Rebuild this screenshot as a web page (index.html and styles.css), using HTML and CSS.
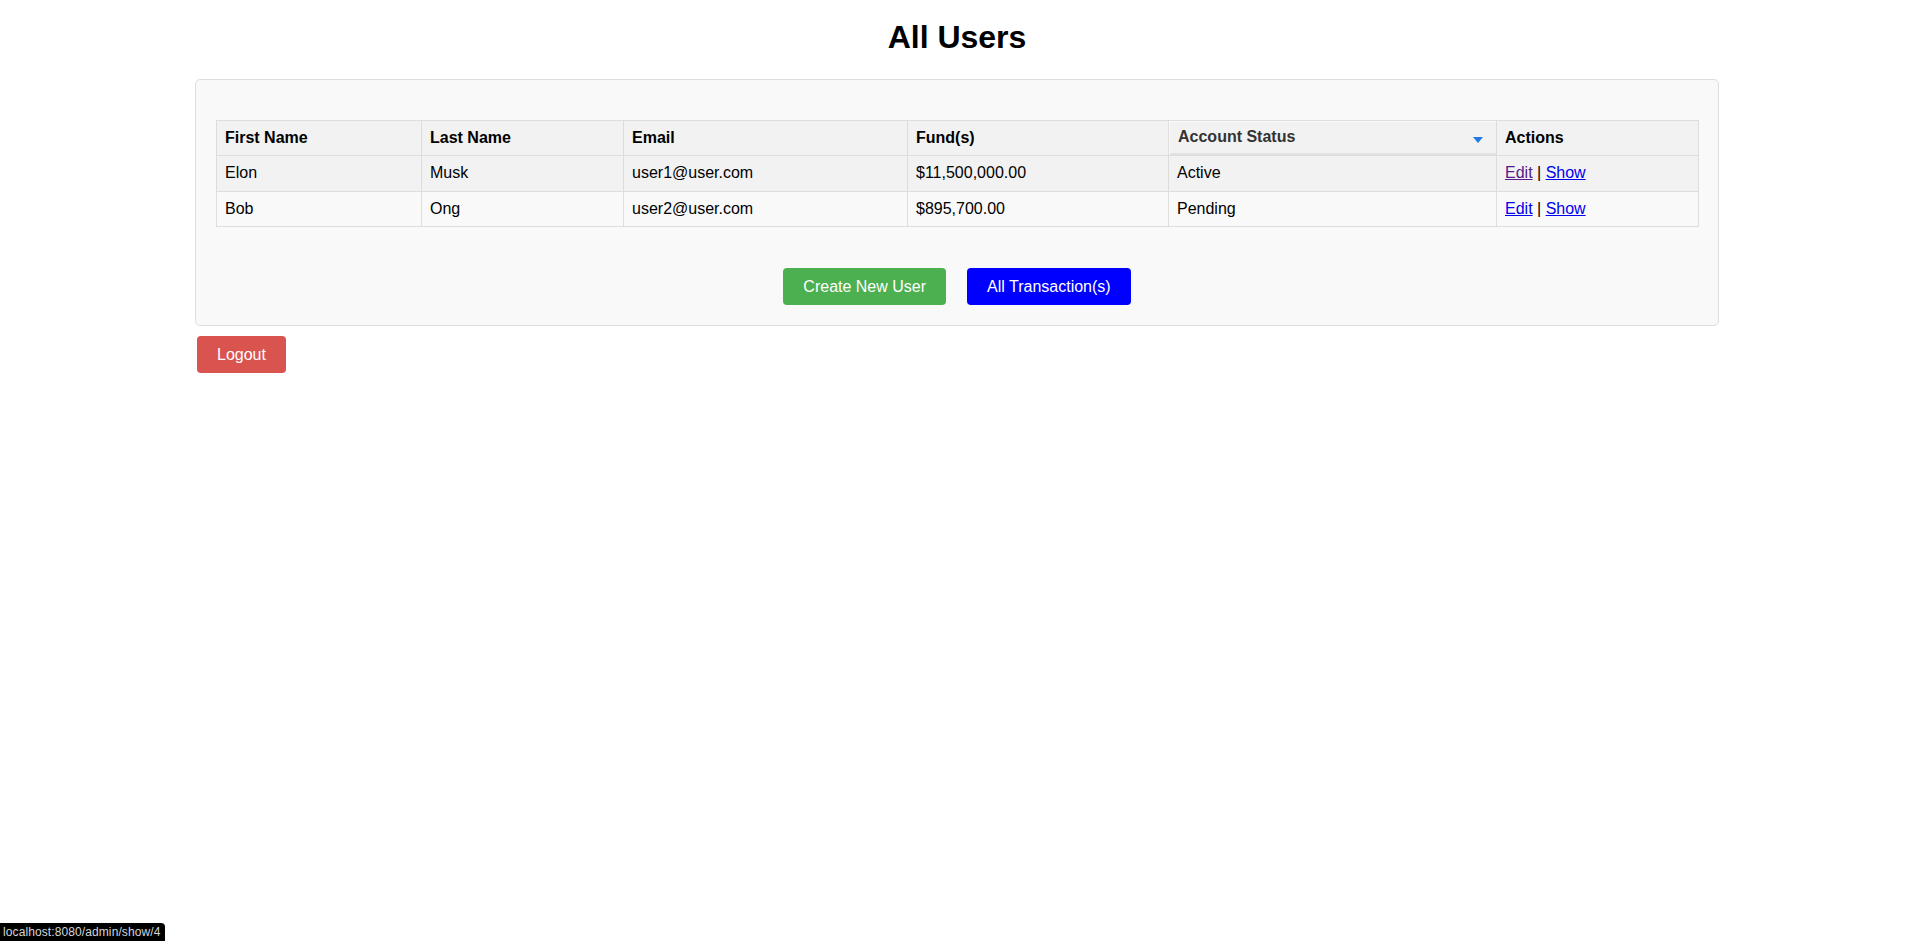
FILE: index.html
```html
<!DOCTYPE html>
<html lang="en">
<head>
<meta charset="utf-8">
<title>All Users</title>
<link rel="stylesheet" href="styles.css">
</head>
<body>
<div class="page">
  <h1 class="title">All Users</h1>
  <div class="panel">
    <table class="users">
      <colgroup>
        <col class="c1"><col class="c2"><col class="c3"><col class="c4"><col class="c5"><col class="c6">
      </colgroup>
      <thead>
        <tr>
          <th>First Name</th>
          <th>Last Name</th>
          <th>Email</th>
          <th>Fund(s)</th>
          <th class="status-th"><div class="status-head"><span>Account Status</span><span class="caret"></span></div></th>
          <th>Actions</th>
        </tr>
      </thead>
      <tbody>
        <tr class="odd">
          <td>Elon</td>
          <td>Musk</td>
          <td>user1@user.com</td>
          <td>$11,500,000.00</td>
          <td>Active</td>
          <td><a class="link visited" href="#">Edit</a> | <a class="link" href="#">Show</a></td>
        </tr>
        <tr class="even">
          <td>Bob</td>
          <td>Ong</td>
          <td>user2@user.com</td>
          <td>$895,700.00</td>
          <td>Pending</td>
          <td><a class="link" href="#">Edit</a> | <a class="link" href="#">Show</a></td>
        </tr>
      </tbody>
    </table>
    <div class="actions">
      <a class="btn btn-green" href="#">Create New User</a>
      <a class="btn btn-blue" href="#">All Transaction(s)</a>
    </div>
  </div>
  <div class="logout-row">
    <a class="btn btn-red" href="#">Logout</a>
  </div>
</div>
<div class="statusbar">localhost:8080/admin/show/4</div>
</body>
</html>
```

FILE: styles.css
```css
html, body {
  margin: 0;
  padding: 0;
  background: #ffffff;
}

body {
  font-family: "Liberation Sans", Arial, sans-serif;
  font-size: 16px;
  color: #000;
}

.page {
  width: 1524px;
  margin: 0 auto;
  transform: translateX(-1px);
}

.title {
  margin: 19px 0 23px;
  font-size: 32px;
  line-height: 37px;
  font-weight: bold;
  text-align: center;
}

.panel {
  background: #f9f9f9;
  border: 1px solid #dedede;
  border-radius: 5px;
  padding: 20px;
  display: flex;
  flex-direction: column;
}

.users {
  width: 100%;
  border-collapse: collapse;
  table-layout: fixed;
  margin: 20px 0 0;
}

.c1 { width: 205px; }
.c2 { width: 202px; }
.c3 { width: 284px; }
.c4 { width: 261px; }
.c5 { width: 328px; }
.c6 { width: 202px; }

.users th,
.users td {
  border: 1px solid #dddddd;
  padding: 8px;
  text-align: left;
  line-height: 18.4px;
  white-space: nowrap;
}

.users th {
  background: #f2f2f2;
  font-weight: bold;
}

.users .odd td {
  background: #f2f2f2;
}

.users .even td {
  background: #f9f9f9;
}

.users th.status-th {
  color: #333;
  padding: 6px 8px 8px 9px;
  box-shadow: inset 1px 1px 0 #fafafa, inset 0 -2px 0 #e2e2e2;
}

.status-head {
  display: flex;
  align-items: center;
  justify-content: space-between;
}

.caret {
  width: 0;
  height: 0;
  border-left: 5.5px solid transparent;
  border-right: 5.5px solid transparent;
  border-top: 6px solid #1e7be0;
  margin-right: 5px;
  margin-top: 5px;
}

.link {
  color: #0000ee;
  text-decoration: underline;
}

.link.visited {
  color: #551a8b;
}

.actions {
  display: flex;
  justify-content: center;
  gap: 21px;
  margin-top: 41px;
}

.btn {
  display: inline-block;
  padding: 10px 20px;
  line-height: 17px;
  font-size: 16px;
  color: #fff;
  text-decoration: none;
  border-radius: 4px;
}

.btn-green { background: #4caf50; }
.btn-blue { background: #0000ff; }
.btn-red { background: #d9534f; }

.logout-row {
  display: flex;
  margin: 10px 0 0 2px;
}

.statusbar {
  position: fixed;
  left: 0;
  bottom: 0;
  height: 18px;
  line-height: 18px;
  padding: 0 5px 0 3px;
  background: #000;
  color: #d6d6d6;
  font-family: "Liberation Sans", Arial, sans-serif;
  font-size: 12px;
  letter-spacing: 0.1px;
  border-top-right-radius: 4px;
}
```
